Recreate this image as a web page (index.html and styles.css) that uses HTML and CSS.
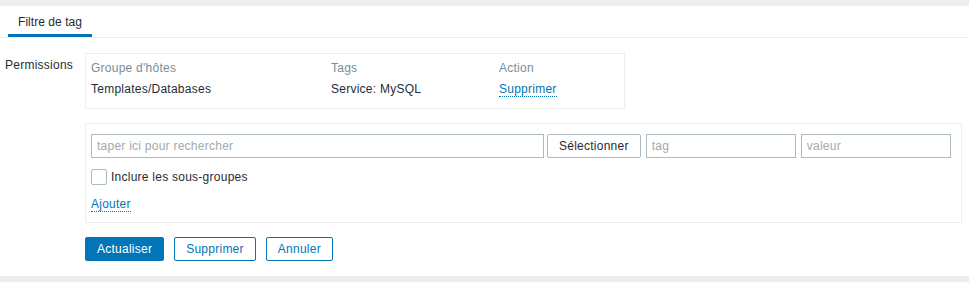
FILE: index.html
```html
<!DOCTYPE html>
<html lang="fr">
<head>
<meta charset="utf-8">
<title>Filtre de tag</title>
<link rel="stylesheet" href="styles.css">
</head>
<body>
<div class="panel">
  <ul class="tabs">
    <li class="tab active">Filtre de tag</li>
  </ul>
  <form class="form">
    <div class="form-row">
      <label class="form-label">Permissions</label>
      <div class="form-field">
        <div class="perm-box">
          <div class="perm-head">Groupe d'hôtes</div>
          <div class="perm-head">Tags</div>
          <div class="perm-head">Action</div>
          <div class="perm-cell">Templates/Databases</div>
          <div class="perm-cell">Service: MySQL</div>
          <div class="perm-cell"><a class="link" href="#">Supprimer</a></div>
        </div>
      </div>
    </div>
    <div class="form-row">
      <div class="form-label"></div>
      <div class="form-field">
        <div class="add-box">
          <div class="add-inputs">
            <input class="input input-search" type="text" placeholder="taper ici pour rechercher">
            <button class="btn-grey" type="button">Sélectionner</button>
            <input class="input input-tag" type="text" placeholder="tag">
            <input class="input input-tag" type="text" placeholder="valeur">
          </div>
          <label class="check-row"><input class="checkbox" type="checkbox"><span>Inclure les sous-groupes</span></label>
          <div class="add-link-row"><a class="link" href="#">Ajouter</a></div>
        </div>
      </div>
    </div>
    <div class="form-row">
      <div class="form-label"></div>
      <div class="form-field buttons">
        <button class="btn btn-primary" type="button">Actualiser</button>
        <button class="btn btn-alt" type="button">Supprimer</button>
        <button class="btn btn-alt" type="button">Annuler</button>
      </div>
    </div>
  </form>
</div>
</body>
</html>
```
FILE: styles.css
```css
* { box-sizing: border-box; }

html, body {
  margin: 0;
  padding: 0;
}

body {
  background: #ebeef0;
  font-family: "Liberation Sans", Arial, sans-serif;
  font-size: 12px;
  line-height: 14px;
  letter-spacing: 0.25px;
  color: #1f2c33;
  padding: 6px 0;
  height: 282px;
  overflow: hidden;
}

.panel {
  background: #ffffff;
  height: 270px;
}

.tabs {
  list-style: none;
  margin: 0;
  padding: 0 0 0 8px;
  display: flex;
  border-bottom: 1px solid #ebeef0;
}

.tab {
  padding: 9px 10px 5px;
  border-bottom: 3px solid transparent;
  letter-spacing: 0.05px;
}

.tab.active {
  border-bottom-color: #0275b8;
}

.form {
  padding-top: 15px;
  display: flex;
  flex-direction: column;
  gap: 14px;
}

.form-row {
  display: grid;
  grid-template-columns: 85px 1fr;
}

.form-label {
  padding: 5px 0 0 5px;
}

.perm-box {
  width: 540px;
  border: 1px solid #ebeef0;
  padding: 7px 5px 12px;
  display: grid;
  grid-template-columns: 240px 168px 1fr;
  row-gap: 7px;
}

.perm-head {
  color: #768d99;
}

.link {
  color: #0275b8;
  text-decoration: none;
  border-bottom: 1px dotted #0275b8;
}

.add-box {
  width: 877px;
  border: 1px solid #ebeef0;
  padding: 10px 5px 10px;
  display: flex;
  flex-direction: column;
}

.add-inputs {
  display: flex;
  align-items: center;
}

.input {
  height: 24px;
  border: 1px solid #acbbc2;
  border-radius: 0;
  padding: 0 5px;
  font: inherit;
  letter-spacing: inherit;
  color: #1f2c33;
  background: #fff;
  outline: none;
}

.input::placeholder {
  color: #a3a9ad;
  opacity: 1;
}

.input-search {
  width: 453px;
}

.input-tag {
  width: 150px;
  margin-left: 5px;
}

.btn-grey {
  height: 24px;
  margin-left: 3px;
  padding: 0 11px;
  border: 1px solid #acbbc2;
  border-radius: 2px;
  background: #fff;
  color: #1f2c33;
  font: inherit;
  letter-spacing: inherit;
}

.check-row {
  display: flex;
  align-items: center;
  gap: 4px;
  margin-top: 11px;
  height: 16px;
}

.checkbox {
  appearance: none;
  -webkit-appearance: none;
  width: 16px;
  height: 16px;
  margin: 0;
  border: 1px solid #acbbc2;
  border-radius: 2px;
  background: #fff;
}

.add-link-row {
  margin-top: 12px;
  height: 15px;
}

.add-link-row .link {
  display: inline-block;
  height: 15px;
}

.buttons {
  display: flex;
  gap: 10px;
}

.btn {
  height: 24px;
  padding: 0 11px;
  border: 1px solid #0275b8;
  border-radius: 2px;
  font: inherit;
  letter-spacing: inherit;
}

.btn-primary {
  background: #0275b8;
  color: #ffffff;
}

.btn-alt {
  background: #ffffff;
  color: #0275b8;
}
```
